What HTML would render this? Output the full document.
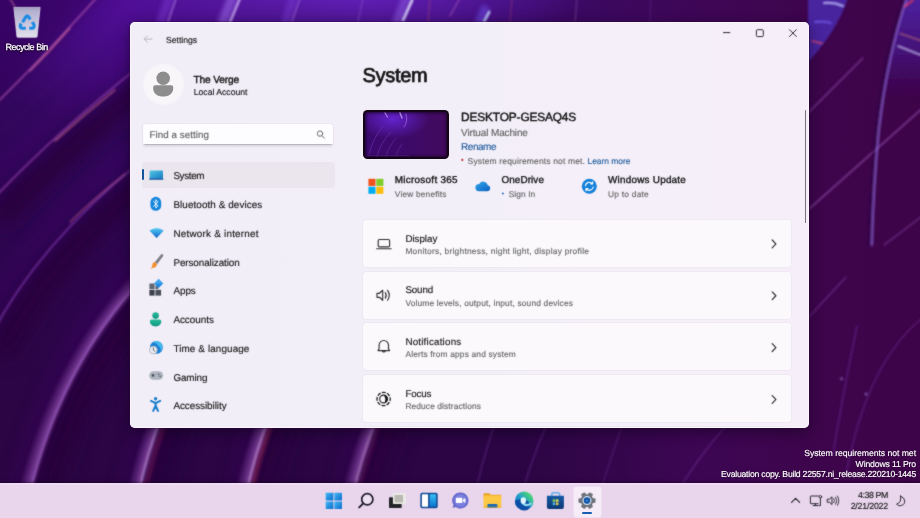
<!DOCTYPE html>
<html lang="en">
<head>
<meta charset="utf-8">
<title>Settings - System</title>
<style>
html,body{margin:0;padding:0;}
body{width:920px;height:518px;overflow:hidden;position:relative;background:#3f0a62;font-family:"Liberation Sans",sans-serif;}
.t{position:absolute;white-space:pre;text-rendering:geometricPrecision;}
.abs{position:absolute;}
#wall{position:absolute;left:0;top:0;width:920px;height:518px;overflow:hidden;
 background:
  radial-gradient(ellipse 250px 70px at 350px -18px, rgba(110,38,210,.95), rgba(110,38,210,0) 100%),
  radial-gradient(ellipse 170px 120px at 125px 10px, rgba(84,14,160,.8), rgba(84,14,160,0) 100%),
  linear-gradient(90deg, rgba(62,6,84,0) 0, rgba(62,6,84,0) 520px, rgba(62,6,84,.95) 700px, rgba(62,5,76,.98) 820px, rgba(62,4,73,.98) 920px),
  linear-gradient(180deg,#3a0968 0%,#32075c 25%,#2e054e 50%,#2c0546 75%,#2b0542 100%);}
#win{position:absolute;left:130px;top:21.500px;width:679.100px;height:406.300px;border-radius:5px;background:linear-gradient(90deg,#f2eef8 0,#f3eff8 50%,#f6eff9 100%);
 box-shadow:inset 0 0 0 1px rgba(255,247,255,.75),0 0 0 .6px rgba(40,10,60,.6),0 4px 14px rgba(12,0,20,.5);overflow:hidden;}
.card{position:absolute;left:233.3px;width:427.6px;height:47.1px;background:#fbf9fc;border-radius:3px;box-shadow:0 0 0 .5px rgba(120,100,130,.08);}
#fx{position:absolute;left:0;top:0;width:920px;height:518px;filter:url(#soft);}
#task{position:absolute;left:0;top:483.300px;width:920px;height:34.700px;background:linear-gradient(180deg,#f2dff7 0,#f0dcf5 1.200px,#e9d6ed 2.200px,#e9d6ed 100%);box-shadow:0 -1px 3px rgba(10,0,18,.45);}
</style>
</head>
<body>
<div id="wall">
<svg class="abs" style="left:0;top:0" width="920" height="518" viewBox="0 0 920 518">
 <defs>
  <filter id="b1" x="-20%" y="-20%" width="140%" height="140%"><feGaussianBlur stdDeviation=".9"/></filter>
  <filter id="b2" x="-30%" y="-30%" width="160%" height="160%"><feGaussianBlur stdDeviation="2"/></filter>
  <filter id="b3" x="-30%" y="-30%" width="160%" height="160%"><feGaussianBlur stdDeviation="3.5"/></filter>
  <filter id="b8" x="-30%" y="-30%" width="160%" height="160%"><feGaussianBlur stdDeviation="9"/></filter>
  <filter id="b14" x="-30%" y="-30%" width="160%" height="160%"><feGaussianBlur stdDeviation="14"/></filter>
 </defs>
 <g fill="none" stroke-linecap="round" filter="url(#b8)">
  <path d="M-8 107 C30 72 65 32 102 -8" transform="translate(13 13)" stroke="#25023a" stroke-width="26" opacity="0.00"/>
  <path d="M-8 200 C40 150 90 105 140 66" transform="translate(13 13)" stroke="#25023a" stroke-width="26" opacity="0.80"/>
  <path d="M-8 334 C25 270 75 215 140 162" transform="translate(13 13)" stroke="#25023a" stroke-width="26" opacity="0.80"/>
  <path d="M29 495 C50 410 85 340 140 281" transform="translate(13 13)" stroke="#25023a" stroke-width="26" opacity="0.80"/>
  <path d="M138 495 C145 462 152 440 162 415" transform="translate(13 13)" stroke="#25023a" stroke-width="26" opacity="0.72"/>
  <path d="M246 495 C253 462 260 440 270 415" transform="translate(13 13)" stroke="#25023a" stroke-width="26" opacity="0.64"/>
  <path d="M353 495 C360 462 368 440 378 415" transform="translate(13 13)" stroke="#25023a" stroke-width="26" opacity="0.56"/>
  <path d="M-20 -20 L112 -20 C70 30 30 75 -20 118Z" fill="#33075a" stroke="none" opacity=".6"/>
 </g>
 <g fill="none" stroke-linecap="round" filter="url(#b8)">
  <path d="M-8 107 C30 72 65 32 102 -8" transform="translate(-9 -9)" stroke="#48107e" stroke-width="11" opacity="0.00"/>
  <path d="M-8 200 C40 150 90 105 140 66" transform="translate(-9 -9)" stroke="#48107e" stroke-width="11" opacity="0.34"/>
  <path d="M-8 334 C25 270 75 215 140 162" transform="translate(-9 -9)" stroke="#48107e" stroke-width="11" opacity="0.34"/>
  <path d="M29 495 C50 410 85 340 140 281" transform="translate(-9 -9)" stroke="#48107e" stroke-width="11" opacity="0.34"/>
  <path d="M138 495 C145 462 152 440 162 415" transform="translate(-9 -9)" stroke="#48107e" stroke-width="11" opacity="0.31"/>
  <path d="M246 495 C253 462 260 440 270 415" transform="translate(-9 -9)" stroke="#48107e" stroke-width="11" opacity="0.27"/>
  <path d="M353 495 C360 462 368 440 378 415" transform="translate(-9 -9)" stroke="#48107e" stroke-width="11" opacity="0.24"/>
 </g>
 <g fill="none" stroke-linecap="round" filter="url(#b2)">
  <path d="M29 495 C50 410 85 340 140 281" transform="translate(-4 0)" stroke="#8a44a8" stroke-width="11" opacity=".42"/>
  <path d="M29 495 C50 410 85 340 140 281" transform="translate(-1.500 0)" stroke="#a868c8" stroke-width="4" opacity=".5"/>
  <path d="M138 495 C145 462 152 440 162 415" transform="translate(-4 0)" stroke="#8a44a8" stroke-width="11" opacity=".42"/>
  <path d="M138 495 C145 462 152 440 162 415" transform="translate(-1.500 0)" stroke="#a868c8" stroke-width="4" opacity=".5"/>
  <path d="M246 495 C253 462 260 440 270 415" transform="translate(-4 0)" stroke="#8a44a8" stroke-width="11" opacity=".42"/>
  <path d="M246 495 C253 462 260 440 270 415" transform="translate(-1.500 0)" stroke="#a868c8" stroke-width="4" opacity=".5"/>
  <path d="M353 495 C360 462 368 440 378 415" transform="translate(-4 0)" stroke="#8a44a8" stroke-width="11" opacity=".42"/>
  <path d="M353 495 C360 462 368 440 378 415" transform="translate(-1.500 0)" stroke="#a868c8" stroke-width="4" opacity=".5"/>
  <path d="M138 495 C145 462 152 440 162 415" transform="translate(6 0)" stroke="#6a104e" stroke-width="5" opacity=".7"/>
  <path d="M246 495 C253 462 260 440 270 415" transform="translate(4.500 0)" stroke="#a02850" stroke-width="3" opacity=".85"/>
  <path d="M353 495 C360 462 368 440 378 415" transform="translate(5 0)" stroke="#6a104e" stroke-width="4" opacity=".5"/>
 </g>
 <g fill="none" stroke-linecap="round" filter="url(#b1)">
  <path d="M-8 107 C30 72 65 32 102 -8" stroke="#b255b0" stroke-width="1.5" opacity="0.85"/>
  <path d="M-8 200 C40 150 90 105 140 66" stroke="#a84cc0" stroke-width="1.5" opacity="0.8"/>
  <path d="M-8 334 C25 270 75 215 140 162" stroke="#9244c4" stroke-width="1.6" opacity="0.75"/>
  <path d="M29 495 C50 410 85 340 140 281" stroke="#a868d0" stroke-width="1.6" opacity="0.8"/>
  <path d="M138 495 C145 462 152 440 162 415" stroke="#c69ae0" stroke-width="1.5" opacity="0.9"/>
  <path d="M246 495 C253 462 260 440 270 415" stroke="#cfa0e0" stroke-width="1.5" opacity="0.9"/>
  <path d="M353 495 C360 462 368 440 378 415" stroke="#c090d0" stroke-width="1.5" opacity="0.8"/>
  <path d="M9 -3 L15 7" stroke="#d070a8" stroke-width="1.3" opacity=".8"/>
  <path d="M30 71 C45 56 58 42 70 28" stroke="#e0709a" stroke-width="1.200" opacity=".75"/>
  <path d="M55 141 C75 123 95 106 115 90" stroke="#e07892" stroke-width="1.200" opacity=".75"/>
  <path d="M70 222 C88 204 105 190 125 174" stroke="#d86a9a" stroke-width="1.200" opacity=".6"/>
  <path d="M475 495 C480 470 486 450 494 426" stroke="#7a3aa8" stroke-width="1.4" opacity=".45"/>
  <path d="M522 495 C528 470 536 450 546 426" stroke="#7a3aa8" stroke-width="1.4" opacity=".45"/>
  <path d="M600 495 C606 470 614 450 622 426" stroke="#7a3aa8" stroke-width="1.3" opacity=".4"/>
  <path d="M676 495 C690 470 706 448 726 426" stroke="#8040a8" stroke-width="1.5" opacity=".45"/>
  <!-- right -->
  <path d="M809 112 L863 58" stroke="#9050b4" stroke-width="1.2" opacity=".75"/>
  <path d="M809 209 L925 106" stroke="#a05cbc" stroke-width="1.2" opacity=".8"/>
  <path d="M884 245 L925 214" stroke="#9050b4" stroke-width="1.2" opacity=".6"/>
  <path d="M808 318 L846 277" stroke="#8a48b0" stroke-width="1.2" opacity=".55"/>
  <path d="M833 455 C840 410 848 370 857 326" stroke="#7434a8" stroke-width="1.5" opacity=".5"/>
  <path d="M846 475 C858 410 880 350 925 316" stroke="#7434a8" stroke-width="1.5" opacity=".5"/>
  <circle cx="841.600" cy="378.800" r="1.200" fill="#b090f0" opacity=".8"/><circle cx="866" cy="394" r="1.200" fill="#b090f0" opacity=".8"/>
  <!-- top strip streaks -->
  <path d="M168 22 L176 -2" stroke="#b88ae8" stroke-width="2" opacity=".6"/>
  <path d="M230 22 L240 -2" stroke="#e0c8ff" stroke-width="2.400" opacity=".8"/>
  <path d="M292 22 L300 -2" stroke="#b080e0" stroke-width="1.600" opacity=".55"/>
  <path d="M358 22 L363 -2" stroke="#a070d8" stroke-width="1.200" opacity=".45"/>
  <path d="M403 20 L412 0" stroke="#eaf0ff" stroke-width="2.800" opacity=".95"/>
  <path d="M428 22 L430 -2" stroke="#b04878" stroke-width="1.100" opacity=".6"/>
  <path d="M450 16 L460 -2" stroke="#c070c0" stroke-width="1.200" opacity=".6"/>
  <path d="M484 21 L489 12" stroke="#cfe4ff" stroke-width="2.800" opacity=".95"/>
  <path d="M510 22 L512 -2" stroke="#a04070" stroke-width="1.100" opacity=".55"/>
  <path d="M575 22 L577 -2" stroke="#b070b0" stroke-width="1" opacity=".5"/>
  <path d="M650 22 L651 -2" stroke="#7a48a8" stroke-width="1" opacity=".4"/>
 </g>
 <g fill="none" stroke-linecap="butt" filter="url(#b2)">
  <path d="M160 24 L170 -4" stroke="#7a3ad0" stroke-width="9" opacity=".5"/>
  <path d="M222 24 L233 -4" stroke="#9a6ae8" stroke-width="10" opacity=".55"/>
  <path d="M285 24 L294 -4" stroke="#7a3ad0" stroke-width="9" opacity=".45"/>
  <path d="M396 24 L407 -4" stroke="#8a5ae0" stroke-width="9" opacity=".55"/>
  <path d="M478 24 L486 6" stroke="#6a4ae0" stroke-width="8" opacity=".6"/>
 </g>
 <!-- top-right ribbons -->
 <defs><linearGradient id="rb" x1="0" y1="0" x2="0" y2="1"><stop offset="0" stop-color="#5026ac" stop-opacity=".9"/><stop offset=".4" stop-color="#4a1c98" stop-opacity=".6"/><stop offset=".75" stop-color="#40107a" stop-opacity="0"/></linearGradient></defs>
 <g filter="url(#b1)">
  <path d="M808 -5 L849 -5 C841 20 827 42 808 62 Z" fill="#4a2cae" opacity=".85"/>
  <path d="M908 -5 C896 30 886 70 878 135 L925 135 L925 -5Z" fill="url(#rb)"/>
 </g>
 <g fill="none" stroke-linecap="round" filter="url(#b1)">
  <path d="M908 -5 C896 30 886 70 879 130 C875 170 873 210 872 245" stroke="#8f6ee0" stroke-width="1.800" opacity=".85"/>
  <path d="M905 -5 C893 30 883 70 876 130 C872 170 870 210 869 245" stroke="#2a0548" stroke-width="2.400" opacity=".55"/>
  <path d="M824 3 Q834 2 843 6" stroke="#c8c8ff" stroke-width="2" opacity=".9"/>
  <path d="M815 22 Q823 21 831 23" stroke="#7a64f4" stroke-width="1.800" opacity=".85"/>
  <path d="M812 41 L822 43.500" stroke="#f0506a" stroke-width="1.600" opacity=".9"/>
  <path d="M905 6.500 L913 0" stroke="#e83858" stroke-width="1.800" opacity=".9"/>
  <path d="M900 33.500 L922 41" stroke="#e08a70" stroke-width="1.200" opacity=".8"/>
  <path d="M898 46 L922 55.500" stroke="#d8d8ff" stroke-width="1.600" opacity=".85"/>
 </g>
</svg>
</div>
<div id="win">
 <!-- avatar -->
 <div class="abs" style="left:11.600px;top:41px;width:43.400px;height:43.400px;border-radius:50%;background:radial-gradient(circle closest-side,#f9f6fa 0,#f9f6fa 88%,rgba(249,246,250,0) 100%);"></div>
 <svg class="abs" style="left:22px;top:48px" width="23" height="28" viewBox="0 0 23 28"><circle cx="11.2" cy="8.2" r="6.8" fill="#8d8d8d"/><path d="M1.2 17.2 a2 2 0 0 1 2-2 h16 a2 2 0 0 1 2 2 v1.2 c0 5-4.5 8.2-10 8.2 s-10-3.2-10-8.2z" fill="#8d8d8d"/></svg>
 <!-- search -->
 <div class="abs" style="left:13.100px;top:102.600px;width:189.800px;height:21.100px;border-radius:3px;background:#fdfcfe;box-shadow:0 0 0 .5px rgba(120,100,130,.07),0 1.500px 2px rgba(80,60,100,.10);overflow:hidden;"><div class="abs" style="left:0;right:0;bottom:0;height:1px;background:#8e8c94;opacity:.62"></div></div>
 <!-- nav selected -->
 <div class="abs" style="left:11.500px;top:140.600px;width:193.600px;height:25.800px;border-radius:3px;background:#ebe6ee;"></div>
 <div class="abs" style="left:11.500px;top:147.200px;width:2.100px;height:11.400px;border-radius:1px;background:#14549a;"></div>
 <!-- thumbnail -->
 <div class="abs" style="left:233.100px;top:88.300px;width:86px;height:49.200px;border-radius:4.500px;background:#140519;"></div>
 <div class="abs" style="left:235px;top:90.200px;width:82.200px;height:45.400px;border-radius:2.500px;overflow:hidden;background:radial-gradient(ellipse 36px 20px at 28px 7px,#6422cc,rgba(100,34,204,0) 100%),linear-gradient(90deg,#3b0a70 0,#3d0a68 55%,#430a5e 100%);box-shadow:inset 0 0 3px 1px rgba(20,4,28,.75);">
  <svg class="abs" style="left:0;top:0;filter:blur(.4px)" width="83" height="46" viewBox="0 0 83 46"><g fill="none" stroke-linecap="round" opacity=".6">
   <path d="M20 1 L22.500 5" stroke="#d8b8ff" stroke-width="1.300"/><path d="M35 1 L37 6" stroke="#e8d0ff" stroke-width="1.400"/><path d="M41 2 Q43 10 39 15" stroke="#b070e8" stroke-width="1.100"/>
   <path d="M4 42 Q8 26 18 14" stroke="#7a38b8" stroke-width=".9"/><path d="M12 44 Q16 30 26 20" stroke="#7a38b8" stroke-width=".9"/><path d="M21 44 Q24 34 31 26" stroke="#7a38b8" stroke-width=".8"/><path d="M31 44 Q33 37 37 32" stroke="#7a38b8" stroke-width=".8"/>
   <path d="M2 43.500 H44" stroke="#6a3098" stroke-width=".6"/>
  </g></svg>
 </div>
 <!-- cards -->
 <div class="card" style="top:198.2px"></div>
 <div class="card" style="top:250.05px"></div>
 <div class="card" style="top:301.9px"></div>
 <div class="card" style="top:353.75px"></div>
 <div class="card" style="top:405.6px"></div>
 <!-- scrollbar -->
 <div class="abs" style="left:675.100px;top:88px;width:1.300px;height:113.300px;border-radius:1px;background:#76737a;"></div>
</div>
<div id="task">
 <div class="abs" style="left:574.400px;top:3.300px;width:26.600px;height:30.200px;border-radius:3px;background:#f5ecf7;box-shadow:0 0 0 .5px rgba(255,255,255,.5);"></div>
 <div class="abs" style="left:581.600px;top:28.900px;width:10.400px;height:1.800px;border-radius:1px;background:#1a5cae;"></div>
</div>
<div id="fx">
<svg class="abs" style="left:0;top:0" width="920" height="518" viewBox="0 0 920 518">
<defs>
 <linearGradient id="gSys" x1="0" y1="0" x2="1" y2="1"><stop offset="0" stop-color="#58c6e4"/><stop offset="1" stop-color="#107cc0"/></linearGradient>
 <linearGradient id="gNet" x1="0" y1="0" x2="0" y2="1"><stop offset="0" stop-color="#5ad0f4"/><stop offset="1" stop-color="#0860c8"/></linearGradient>
 <linearGradient id="gAcc" x1="0" y1="0" x2="0" y2="1"><stop offset="0" stop-color="#28bc9a"/><stop offset="1" stop-color="#0f9480"/></linearGradient>
 <linearGradient id="gStart" x1="0" y1="0" x2="1" y2="1"><stop offset="0" stop-color="#44b8f4"/><stop offset="1" stop-color="#0a6ccc"/></linearGradient>
 <linearGradient id="gWid" x1="0" y1="0" x2="0" y2="1"><stop offset="0" stop-color="#38c0f4"/><stop offset="1" stop-color="#0a74d0"/></linearGradient>
 <linearGradient id="gBin" x1="0" y1="0" x2="0" y2="1"><stop offset="0" stop-color="#aeabcb"/><stop offset=".5" stop-color="#c6c3dc"/><stop offset="1" stop-color="#e2e0ec"/></linearGradient>
 <linearGradient id="gEdge" x1="0" y1="1" x2="1" y2="0"><stop offset="0" stop-color="#0c59b8"/><stop offset=".48" stop-color="#1f9ccc"/><stop offset=".8" stop-color="#46d07c"/><stop offset="1" stop-color="#7ae29a"/></linearGradient>
 <linearGradient id="gStore" x1="0" y1="0" x2="0" y2="1"><stop offset="0" stop-color="#155aa4"/><stop offset="1" stop-color="#0a3874"/></linearGradient>
 <linearGradient id="gCloud" x1="0" y1="0" x2="1" y2="1"><stop offset="0" stop-color="#30a8ec"/><stop offset="1" stop-color="#0a60c0"/></linearGradient>
 <filter id="soft" x="0" y="0" width="100%" height="100%" color-interpolation-filters="sRGB"><feConvolveMatrix order="3" kernelMatrix="1 2 1 2 18 2 1 2 1" divisor="30" edgeMode="duplicate" preserveAlpha="false"/></filter>
 <filter id="s1" x="-20%" y="-20%" width="140%" height="140%"><feGaussianBlur stdDeviation=".35"/></filter>
</defs>

<!-- recycle bin -->
<g filter="url(#s1)">
 <path d="M13.900 7.400 L40.100 7.400 L37.100 36.400 Q37 37.300 36.100 37.300 L17.900 37.300 Q17 37.300 16.900 36.400 Z" fill="url(#gBin)" stroke="#ece9f4" stroke-width=".7"/>
 <path d="M13.900 7.400 L40.100 7.400 L39.800 10 L14.200 10Z" fill="#a5a1c0" opacity=".75"/>
 <g fill="none" stroke="#1b8be4" stroke-width="3.100" stroke-linejoin="round" transform="translate(0 1.400)">
  <path d="M22.600 20.800 L25.700 15.600 Q27.200 13.800 28.700 15.600 L30.200 18.200"/>
  <path d="M32.400 20.600 L34 23.600 Q34.800 26.600 31.800 26.900 L29.200 26.900"/>
  <path d="M25.800 26.900 L22.600 26.900 Q19.600 26.600 20.400 23.600 L21.200 22.200"/>
 </g>
</g>

<!-- title bar -->
<g fill="none" stroke="#b9b5bd" stroke-width="1" stroke-linecap="round" stroke-linejoin="round">
 <path d="M144.3 39.1 H152 M147.4 35.9 L144.2 39.1 L147.4 42.3"/>
</g>
<g fill="none" stroke="#2b2b2b" stroke-width="1">
 <path d="M723 32.6 H730.2"/>
 <rect x="756.4" y="29.7" width="6.9" height="6.9" rx="1"/>
 <path d="M789.2 29.4 L796.6 36.8 M796.6 29.4 L789.2 36.8"/>
</g>

<!-- search magnifier -->
<g fill="none" stroke="#6a6a6a" stroke-width="1" stroke-linecap="round">
 <circle cx="320" cy="133.6" r="2.7"/><path d="M322 135.7 L324.4 138.2"/>
</g>

<!-- NAV ICONS -->
<!-- system -->
<rect x="149.6" y="170.4" width="13.4" height="8.2" rx=".8" fill="url(#gSys)"/>
<rect x="149.2" y="178.3" width="14.2" height="1.5" rx=".6" fill="#0c5aa6"/>
<!-- bluetooth -->
<rect x="150.4" y="196.8" width="10.8" height="14" rx="5.4" fill="#1486dc"/>
<path d="M153.4 201.2 L158 205.8 L155.8 208 V199.6 L158 201.8 L153.4 206.4" fill="none" stroke="#fff" stroke-width=".9" stroke-linejoin="round" stroke-linecap="round"/>
<!-- network -->
<path d="M156.6 238 L149.4 230.6 Q156.6 225.2 163.8 230.6 Z" fill="url(#gNet)"/>
<!-- personalization -->
<path d="M162.6 254.2 Q163.8 255 163 256.2 L157.2 264 L154.8 262.2 L161 254.6 Q161.8 253.8 162.6 254.2Z" fill="#7c7c84"/>
<path d="M154.6 262 L157.2 264.2 Q156.6 268 150.2 268.4 Q152.8 266.8 152.4 264.6 Q152.6 262.2 154.6 262Z" fill="#f0902c"/>
<!-- apps -->
<rect x="149.400" y="283.500" width="5.200" height="5.600" fill="#5e6672"/><rect x="149.400" y="289.800" width="5.200" height="5.800" fill="#3a3f49"/><rect x="155.400" y="289.800" width="5.700" height="5.800" fill="#4a505b"/>
<rect x="155.400" y="285.500" width="3" height="3.600" fill="#5e6672"/>
<path d="M158.700 279 L163.200 283.500 L158.700 288 L154.200 283.500Z" fill="#1f8ae2"/>
<path d="M158.700 279 L163.200 283.500 L154.200 283.500Z" fill="#46a6f0"/>
<!-- accounts -->
<circle cx="155.6" cy="315.6" r="3.3" fill="url(#gAcc)"/>
<path d="M149.9 321 a1.6 1.6 0 0 1 1.6-1.6 h8.2 a1.6 1.6 0 0 1 1.6 1.6 v.6 c0 3-2.6 4.9-5.7 4.9 s-5.7-1.900-5.700-4.900z" fill="url(#gAcc)"/>
<!-- time & language -->
<circle cx="156.4" cy="347.4" r="6.4" fill="#1a7fd4"/>
<path d="M153 342.200 Q157 343 158.4 346 Q161 347 160.6 351 Q162.800 349 162.700 346.500 Q161.500 342 157 341.100 Q154.500 341 153 342.200Z" fill="#4cc2f0" opacity=".85"/>
<circle cx="153.4" cy="350" r="3.900" fill="#e8ecf2" stroke="#8a93a0" stroke-width=".6"/>
<path d="M153.400 347.800 V350.200 L155 351.200" fill="none" stroke="#4a5260" stroke-width=".8" stroke-linecap="round"/>
<!-- gaming -->
<rect x="149.200" y="371.200" width="14" height="8.600" rx="4.300" fill="#adb4bf"/>
<circle cx="153" cy="375.400" r="1.300" fill="#4c525c"/><circle cx="158.600" cy="374.200" r=".8" fill="#4c525c"/><circle cx="160.200" cy="376.400" r=".8" fill="#4c525c"/>
<!-- accessibility -->
<circle cx="155.600" cy="398.700" r="1.700" fill="#1b7fcc"/>
<g fill="none" stroke="#1b7fcc" stroke-width="2" stroke-linecap="round" stroke-linejoin="round">
 <path d="M151 400.900 L155.600 403.100 L160.200 400.900"/>
 <path d="M155.600 402.900 V406.200 M155.600 405.600 L153.200 410.900 M155.600 405.600 L158 410.900" stroke-width="2.100"/>
</g>

<!-- MS365 -->
<rect x="368.400" y="178.800" width="7.100" height="7.100" fill="#f1511b"/><rect x="376.300" y="178.800" width="7.100" height="7.100" fill="#80cc28"/>
<rect x="368.400" y="186.700" width="7.100" height="7.100" fill="#00adef"/><rect x="376.300" y="186.700" width="7.100" height="7.100" fill="#fbbc09"/>
<!-- onedrive -->
<path d="M479 191.200 h8.200 a3 3 0 0 0 .5-5.950 a4.600 4.600 0 0 0-8.500-1.300 a3.700 3.700 0 0 0-3.800 3.650 a3.400 3.400 0 0 0 3.600 3.600z" fill="url(#gCloud)"/>
<!-- sign in bullet, req bullet -->
<circle cx="502.900" cy="193.500" r="1" fill="#2a6cc0"/>
<circle cx="462.300" cy="159.900" r="1.100" fill="#b8303c"/>
<!-- windows update -->
<circle cx="589.300" cy="186.300" r="7.500" fill="#1380da"/>
<g fill="none" stroke="#fff" stroke-width="1.200" stroke-linecap="round" stroke-linejoin="round">
 <path d="M585.400 185.600 A4 4 0 0 1 592.400 183.700 M592.600 181.900 V183.900 H590.600"/>
 <path d="M593.200 187 A4 4 0 0 1 586.200 188.900 M586 190.700 V188.700 H588"/>
</g>

<!-- card icons -->
<g fill="none" stroke="#303030" stroke-width="1.150" stroke-linecap="round" stroke-linejoin="round">
 <rect x="378.200" y="239.500" width="11.400" height="7.400" rx="1.200"/><path d="M376.600 248.700 H391.200"/>
 <path d="M377 293.300 h2.400 l3.300 -3 v10 l-3.300 -3 h-2.400z"/><path d="M385.300 292.500 Q387.100 295.300 385.300 298.100 M387.600 290.400 Q391 295.300 387.600 300.200"/>
 <path d="M378 350.600 h11.600 l-1.100 -1.900 v-3.500 a4.700 4.700 0 0 0 -9.400 0 v3.500z M382.300 351 a1.600 1.600 0 0 0 3 0"/>
 <circle cx="383.600" cy="399" r="6.600" stroke="#1a1a1a" stroke-width="1.300" stroke-dasharray="3.850 1.330" stroke-dashoffset="1.900" stroke-linecap="butt"/>
 <circle cx="383.600" cy="399" r="3.900" stroke="#1a1a1a" stroke-width="1.100"/>
 <!-- chevrons -->
 <path d="M772.200 240.00 L775.900 243.90 L772.200 247.80" stroke-width="1.200"/>
 <path d="M772.200 291.85 L775.900 295.75 L772.200 299.65" stroke-width="1.200"/>
 <path d="M772.200 343.70 L775.900 347.60 L772.200 351.50" stroke-width="1.200"/>
 <path d="M772.200 395.55 L775.900 399.45 L772.200 403.35" stroke-width="1.200"/>
</g>
<path d="M384 395.100 A3.900 3.900 0 0 1 384.800 402.700 Q386.200 399 384 395.100Z" fill="#141414"/>

<!-- TASKBAR ICONS -->
<!-- start -->
<rect x="325.700" y="492.800" width="7.700" height="7.700" rx=".4" fill="url(#gStart)"/><rect x="334.300" y="492.800" width="7.700" height="7.700" rx=".4" fill="url(#gStart)"/>
<rect x="325.700" y="501.400" width="7.700" height="7.700" rx=".4" fill="url(#gStart)"/><rect x="334.300" y="501.400" width="7.700" height="7.700" rx=".4" fill="url(#gStart)"/>
<!-- search -->
<circle cx="367.300" cy="499.300" r="5.600" fill="#f3ecf6" fill-opacity=".5" stroke="#201a2c" stroke-width="1.700"/>
<path d="M363.300 503.400 L359.200 507.400" stroke="#201a2c" stroke-width="2" stroke-linecap="round"/>
<!-- task view -->
<rect x="389" y="497.300" width="12.700" height="10.700" rx=".8" fill="#242428"/>
<rect x="392.900" y="492.800" width="13.100" height="11.300" rx=".8" fill="#e9e8e4"/>
<rect x="394.600" y="495" width="8.400" height="7.400" fill="#b9b9b1"/>
<!-- widgets -->
<rect x="420.300" y="492.700" width="17.400" height="15.600" rx="1.800" fill="#114c94"/>
<rect x="421.900" y="494.300" width="6.200" height="12.400" rx=".6" fill="#fff"/>
<rect x="429.700" y="494.300" width="6.400" height="12.400" rx=".6" fill="url(#gWid)"/>
<!-- chat -->
<path d="M460.500 492.500 a8 8 0 1 1 -4.600 14.550 l-3.300 1.050 l.9 -3.300 a8 8 0 0 1 7 -12.300z" fill="#6568cc"/>
<circle cx="460.500" cy="500.500" r="6.300" fill="#7b80e0"/>
<rect x="455.900" y="497.700" width="6.400" height="5.400" rx=".9" fill="#fff"/><path d="M462.800 499.800 L465.400 498 V503 L462.800 501.200Z" fill="#fff"/>
<!-- explorer -->
<path d="M483.500 494.200 a1 1 0 0 1 1 -1 h4.600 l1.600 1.600 h9.600 a1 1 0 0 1 1 1 v2 h-17.800z" fill="#e9a21e"/>
<rect x="483.500" y="495.600" width="17.800" height="12.100" rx="1.200" fill="#fcc742"/>
<path d="M487.400 507.700 v-2.600 a1.200 1.200 0 0 1 1.200 -1.200 h7.600 a1.200 1.200 0 0 1 1.200 1.200 v2.600z" fill="#1467b8"/>
<rect x="483.500" y="506.500" width="17.800" height="1.200" fill="#e8a81e" opacity=".55"/>
<!-- edge -->
<clipPath id="cEdge"><circle cx="524.200" cy="500.900" r="9.300"/></clipPath>
<circle cx="524.200" cy="500.900" r="9.300" fill="url(#gEdge)"/>
<g clip-path="url(#cEdge)">
 <ellipse cx="521.400" cy="505.400" rx="8.600" ry="6.400" fill="#0b4aa4" opacity=".92"/>
 <path d="M514 505 Q520 514 533 507 L534 512 L514 512Z" fill="#0a3a86" opacity=".8"/>
 <path d="M522.600 503 Q526.300 507 530.800 503.600" fill="none" stroke="#8fdcf2" stroke-width="2.200" stroke-linecap="round"/>
 <ellipse cx="523.300" cy="500.600" rx="2.700" ry="3.300" fill="#dff5fc"/>
</g>
<!-- store -->
<path d="M551.700 496 v-1.300 a1.900 1.900 0 0 1 1.900 -1.900 h4.200 a1.900 1.900 0 0 1 1.900 1.900 v1.300" fill="none" stroke="#62aeea" stroke-width="1.500"/>
<path d="M546.900 495.800 h17 v11.200 a2 2 0 0 1 -2 2 h-13 a2 2 0 0 1 -2 -2z" fill="url(#gStore)"/>
<rect x="552.700" y="499.300" width="2.600" height="2.600" fill="#86c858"/><rect x="555.900" y="499.300" width="2.600" height="2.600" fill="#d8d458"/>
<rect x="552.700" y="502.500" width="2.600" height="2.600" fill="#58b0dc"/><rect x="555.900" y="502.500" width="2.600" height="2.600" fill="#e0c04c"/>
<!-- settings gear -->
<g transform="translate(587 500.600)">
 <g fill="#6c7078">
  <circle r="6.400"/>
  <rect x="-8.500" y="-2.300" width="17" height="4.600" rx="1.100"/>
  <rect x="-8.500" y="-2.300" width="17" height="4.600" rx="1.100" transform="rotate(60)"/>
  <rect x="-8.500" y="-2.300" width="17" height="4.600" rx="1.100" transform="rotate(120)"/>
 </g>
 <circle r="4.500" fill="#dceefb"/><circle r="3.300" fill="#0f4fa2"/><circle r="1.200" fill="#3f8fdc"/>
</g>

<!-- TRAY -->
<g fill="none" stroke="#2c2830" stroke-width="1.200" stroke-linecap="round" stroke-linejoin="round">
 <path d="M791.600 502.400 L795.600 498.300 L799.600 502.400"/>
</g>
<g fill="none" stroke="#2c2830" stroke-width="1" stroke-linecap="round" stroke-linejoin="round">
 <path d="M818.400 496 H811 a.6 .6 0 0 0 -.6 .6 v6.500 a.6 .6 0 0 0 .6 .6 h7.200 M813.200 505.600 h4.400 M815.400 503.800 v1.800"/>
 <circle cx="820.400" cy="496.800" r="1.300"/><path d="M820.400 498.200 V505.600 h-1.600"/>
 <path d="M827.600 499.200 h1.800 l2.600 -2.400 v7.800 l-2.600 -2.400 h-1.800z"/><path d="M833.900 498.700 Q835.200 500.700 833.900 502.700 M835.700 497.200 Q838 500.700 835.700 504.200 M837.400 496 Q840.400 500.700 837.400 505.400" stroke-width=".9"/>
 <path d="M900.600 496 Q904.800 497.800 904.800 501.400 Q904.200 505.600 899.600 505.800 Q897.600 505.600 896.600 504 Q901.600 503.200 900.600 496Z"/>
</g>
</svg>

<!-- text -->
<span class="t" style="left:166.0px;top:36.04px;font-size:8.7px;line-height:8.7px;-webkit-text-stroke:.14px currentColor;color:#141414;letter-spacing:-0.049px;">Settings</span>
<span class="t" style="left:193.5px;top:75.77px;font-size:10.2px;line-height:10.2px;-webkit-text-stroke:0.37px currentColor;color:#141414;letter-spacing:-0.180px;">The Verge</span>
<span class="t" style="left:193.7px;top:88.04px;font-size:8.7px;line-height:8.7px;-webkit-text-stroke:.14px currentColor;color:#141414;letter-spacing:-0.023px;">Local Account</span>
<span class="t" style="left:149.6px;top:131.00px;font-size:9.8px;line-height:9.8px;-webkit-text-stroke:.14px currentColor;color:#606060;letter-spacing:0.041px;">Find a setting</span>
<span class="t" style="left:173.4px;top:172.07px;font-size:9.9px;line-height:9.9px;-webkit-text-stroke:.14px currentColor;color:#141414;letter-spacing:-0.356px;">System</span>
<span class="t" style="left:173.4px;top:201.02px;font-size:9.9px;line-height:9.9px;-webkit-text-stroke:.14px currentColor;color:#141414;letter-spacing:0.090px;">Bluetooth &amp; devices</span>
<span class="t" style="left:173.4px;top:230.07px;font-size:9.9px;line-height:9.9px;-webkit-text-stroke:.14px currentColor;color:#141414;letter-spacing:0.231px;">Network &amp; internet</span>
<span class="t" style="left:173.4px;top:258.92px;font-size:9.9px;line-height:9.9px;-webkit-text-stroke:.14px currentColor;color:#141414;letter-spacing:-0.082px;">Personalization</span>
<span class="t" style="left:173.4px;top:287.07px;font-size:9.9px;line-height:9.9px;-webkit-text-stroke:.14px currentColor;color:#141414;letter-spacing:-0.029px;">Apps</span>
<span class="t" style="left:173.4px;top:316.02px;font-size:9.9px;line-height:9.9px;-webkit-text-stroke:.14px currentColor;color:#141414;letter-spacing:-0.028px;">Accounts</span>
<span class="t" style="left:173.4px;top:345.07px;font-size:9.9px;line-height:9.9px;-webkit-text-stroke:.14px currentColor;color:#141414;letter-spacing:0.120px;">Time &amp; language</span>
<span class="t" style="left:173.4px;top:373.92px;font-size:9.9px;line-height:9.9px;-webkit-text-stroke:.14px currentColor;color:#141414;letter-spacing:-0.113px;">Gaming</span>
<span class="t" style="left:173.4px;top:402.07px;font-size:9.9px;line-height:9.9px;-webkit-text-stroke:.14px currentColor;color:#141414;letter-spacing:-0.045px;">Accessibility</span>
<span class="t" style="left:362.6px;top:66.07px;font-size:20px;line-height:20px;-webkit-text-stroke:0.72px currentColor;color:#141414;letter-spacing:-0.331px;">System</span>
<span class="t" style="left:461.1px;top:112.03px;font-size:11.9px;line-height:11.9px;-webkit-text-stroke:0.43px currentColor;color:#141414;letter-spacing:-0.160px;">DESKTOP-GESAQ4S</span>
<span class="t" style="left:461.1px;top:128.83px;font-size:10px;line-height:10px;-webkit-text-stroke:.14px currentColor;color:#626262;letter-spacing:-0.137px;">Virtual Machine</span>
<span class="t" style="left:461.1px;top:142.83px;font-size:10px;line-height:10px;-webkit-text-stroke:.14px currentColor;color:#235f9f;letter-spacing:-0.469px;">Rename</span>
<span class="t" style="left:467.6px;top:157.00px;font-size:8.5px;line-height:8.5px;-webkit-text-stroke:.14px currentColor;color:#656565;letter-spacing:0.147px;">System requirements not met.</span>
<span class="t" style="left:587.5px;top:157.00px;font-size:8.5px;line-height:8.5px;-webkit-text-stroke:.14px currentColor;color:#235f9f;letter-spacing:-0.047px;">Learn more</span>
<span class="t" style="left:394.8px;top:176.02px;font-size:9.9px;line-height:9.9px;-webkit-text-stroke:0.36px currentColor;color:#141414;letter-spacing:0.286px;">Microsoft 365</span>
<span class="t" style="left:394.8px;top:190.07px;font-size:8.3px;line-height:8.3px;-webkit-text-stroke:.14px currentColor;color:#656565;letter-spacing:0.200px;">View benefits</span>
<span class="t" style="left:501.5px;top:176.02px;font-size:9.9px;line-height:9.9px;-webkit-text-stroke:0.36px currentColor;color:#141414;letter-spacing:0.098px;">OneDrive</span>
<span class="t" style="left:508.7px;top:190.07px;font-size:8.3px;line-height:8.3px;-webkit-text-stroke:.14px currentColor;color:#656565;letter-spacing:0.108px;">Sign In</span>
<span class="t" style="left:608.0px;top:176.02px;font-size:9.9px;line-height:9.9px;-webkit-text-stroke:0.36px currentColor;color:#141414;letter-spacing:0.246px;">Windows Update</span>
<span class="t" style="left:608.0px;top:190.07px;font-size:8.3px;line-height:8.3px;-webkit-text-stroke:.14px currentColor;color:#656565;letter-spacing:0.270px;">Up to date</span>
<span class="t" style="left:405.4px;top:234.90px;font-size:9.8px;line-height:9.8px;-webkit-text-stroke:.14px currentColor;color:#141414;letter-spacing:-0.032px;">Display</span>
<span class="t" style="left:405.4px;top:247.04px;font-size:8.4px;line-height:8.4px;-webkit-text-stroke:.14px currentColor;color:#656565;letter-spacing:0.240px;">Monitors, brightness, night light, display profile</span>
<span class="t" style="left:405.4px;top:286.07px;font-size:9.8px;line-height:9.8px;-webkit-text-stroke:.14px currentColor;color:#141414;letter-spacing:-0.129px;">Sound</span>
<span class="t" style="left:405.4px;top:299.01px;font-size:8.4px;line-height:8.4px;-webkit-text-stroke:.14px currentColor;color:#656565;letter-spacing:0.165px;">Volume levels, output, input, sound devices</span>
<span class="t" style="left:405.4px;top:338.04px;font-size:9.8px;line-height:9.8px;-webkit-text-stroke:.14px currentColor;color:#141414;letter-spacing:0.202px;">Notifications</span>
<span class="t" style="left:405.4px;top:350.08px;font-size:8.4px;line-height:8.4px;-webkit-text-stroke:.14px currentColor;color:#656565;letter-spacing:0.166px;">Alerts from apps and system</span>
<span class="t" style="left:405.4px;top:390.01px;font-size:9.8px;line-height:9.8px;-webkit-text-stroke:.14px currentColor;color:#141414;letter-spacing:-0.138px;">Focus</span>
<span class="t" style="left:405.4px;top:402.05px;font-size:8.4px;line-height:8.4px;-webkit-text-stroke:.14px currentColor;color:#656565;letter-spacing:0.107px;">Reduce distractions</span>
<span class="t" style="left:858.0px;top:491.05px;font-size:8.8px;line-height:8.8px;-webkit-text-stroke:.14px currentColor;color:#141414;letter-spacing:-0.395px;">4:38 PM</span>
<span class="t" style="left:850.7px;top:502.05px;font-size:8.8px;line-height:8.8px;-webkit-text-stroke:.14px currentColor;color:#141414;letter-spacing:-0.205px;">2/21/2022</span>
</div>
<span class="t" style="left:804.2px;top:449.04px;font-size:8.7px;line-height:8.7px;color:#fff;letter-spacing:-0.062px;-webkit-text-stroke:.15px #fff;text-shadow:0 0 2px rgba(0,0,0,.5);">System requirements not met</span>
<span class="t" style="left:855.6px;top:460.04px;font-size:8.7px;line-height:8.7px;color:#fff;letter-spacing:-0.158px;-webkit-text-stroke:.15px #fff;text-shadow:0 0 2px rgba(0,0,0,.5);">Windows 11 Pro</span>
<span class="t" style="left:721.0px;top:470.04px;font-size:8.7px;line-height:8.7px;color:#fff;letter-spacing:-0.246px;-webkit-text-stroke:.15px #fff;text-shadow:0 0 2px rgba(0,0,0,.5);">Evaluation copy. Build 22557.ni_release.220210-1445</span>
<span class="t" style="left:5.5px;top:43.08px;font-size:9px;line-height:9px;color:#fff;letter-spacing:-0.485px;-webkit-text-stroke:.25px #fff;text-shadow:0 1px 2px rgba(0,0,0,.9),0 0 3px rgba(0,0,0,.6);">Recycle Bin</span>
</body>
</html>
